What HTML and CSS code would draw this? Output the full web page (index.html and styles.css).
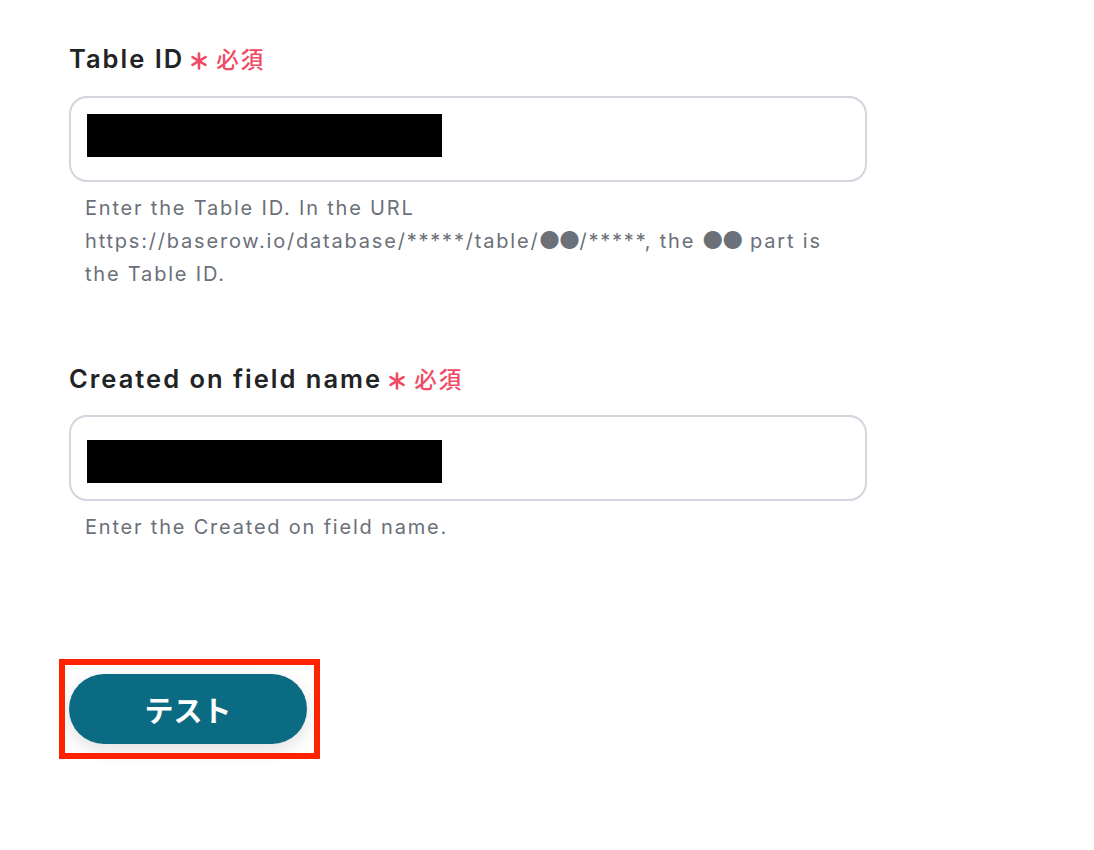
FILE: index.html
```html
<!DOCTYPE html>
<html lang="ja">
<head>
<meta charset="utf-8">
<link rel="stylesheet" href="styles.css">
</head>
<body>
<div class="page">
  <div class="field">
    <div class="label">
      <span class="label-text">Table ID</span>
      <svg class="req-star" viewBox="0 0 18 18" width="18" height="18"><g stroke="#f04a64" stroke-width="2.6" stroke-linecap="round"><line x1="9" y1="1.5" x2="9" y2="16.5"/><line x1="2.5" y1="5.2" x2="15.5" y2="12.8"/><line x1="2.5" y1="12.8" x2="15.5" y2="5.2"/></g></svg>
      <span class="req-text">必須</span>
    </div>
    <div class="input"><div class="redact"></div></div>
    <div class="help">Enter the Table ID. In the URL<br>https://baserow.io/database/*****/table/<span class="dots">●●</span>/*****, the <span class="dots">●●</span> part is<br>the Table ID.</div>
  </div>
  <div class="field second">
    <div class="label">
      <span class="label-text">Created on field name</span>
      <svg class="req-star" viewBox="0 0 18 18" width="18" height="18"><g stroke="#f04a64" stroke-width="2.6" stroke-linecap="round"><line x1="9" y1="1.5" x2="9" y2="16.5"/><line x1="2.5" y1="5.2" x2="15.5" y2="12.8"/><line x1="2.5" y1="12.8" x2="15.5" y2="5.2"/></g></svg>
      <span class="req-text">必須</span>
    </div>
    <div class="input"><div class="redact"></div></div>
    <div class="help">Enter the Created on field name.</div>
  </div>
  <div class="actions">
    <div class="btn-wrap">
      <button class="btn">テスト</button>
      <div class="highlight"></div>
    </div>
  </div>
</div>
</body>
</html>
```
FILE: styles.css
```css
* { box-sizing: border-box; }
html, body { margin: 0; padding: 0; background: #fff; }
body { font-family: Inter, "Noto Sans CJK JP", sans-serif; }
.page { padding: 40px 0 120px 69px; width: 867px; min-height: 850px; }
.field { display: flex; flex-direction: column; }
.field.second { margin-top: 69px; }
.label { display: flex; align-items: center; height: 36px; }
.label-text { font-size: 25.5px; font-weight: 600; color: #222325; letter-spacing: 2px; }
.req-star { margin-left: 6px; margin-top: 6px; }
.req-text { margin-left: 8px; font-size: 22.5px; font-weight: 500; color: #f04a64; letter-spacing: 2px; font-family: "Noto Sans CJK JP", sans-serif; }
.input { margin-top: 20px; height: 86px; border: 2px solid #d3d6de; border-radius: 18px; padding: 16px 0 0 16px; }
.second .input { margin-top: 19px; height: 86px; padding-top: 23px; }
.redact { width: 355px; height: 43px; background: #000; }
.help { margin-top: 10px; padding-left: 16px; font-size: 20px; line-height: 33px; color: #6b7079; letter-spacing: 1.8px; }
.dots { font-family: "Noto Sans CJK JP", sans-serif; letter-spacing: 0; line-height: 1; }
.actions { margin-top: 130px; }
.btn-wrap { position: relative; display: inline-block; }
.btn { width: 238px; height: 70px; border: none; border-radius: 35px; background: #0b6b82; color: #fff; font-family: "Noto Sans CJK JP", sans-serif; font-size: 29px; font-weight: 700; box-shadow: 0 6px 18px rgba(0,0,0,0.12); display: block; padding: 0; }
.highlight { position: absolute; left: -10px; top: -15px; width: 261px; height: 100px; border: 6px solid #ff2200; pointer-events: none; }
```
